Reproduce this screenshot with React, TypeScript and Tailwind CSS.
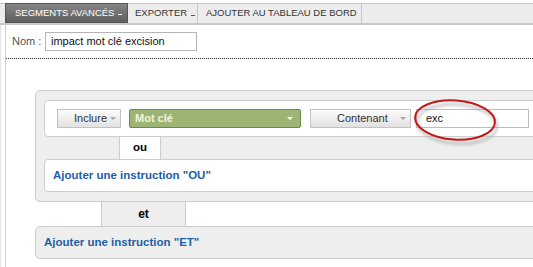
import React from "react";

const Caret = ({ color = "#a8a8a8" }: { color?: string }) => (
  <span
    className="inline-block h-0 w-0 border-x-[3px] border-x-transparent border-t-[3px]"
    style={{ borderTopColor: color }}
  />
);

const App = () => {
  return (
    <div className="relative w-[533px] h-[267px] overflow-hidden bg-white font-['Liberation_Sans',Arial,sans-serif]">
      {/* tab bar */}
      <div className="pt-[3px]">
        <div className="flex h-[22px] border-t border-[#c6c6c6] border-b-2 border-b-[#c9c9c9] bg-[#ececec] pl-[5px] text-[9.5px] uppercase">
          <div className="flex w-[123px] items-center gap-[4px] bg-gradient-to-b from-[#858585] to-[#5e5e5e] border border-[#555] pl-[9px] text-white -mt-px">
            Segments avancés <span className="mt-[3px] h-px w-[4px] bg-white" />
          </div>
          <div className="flex w-[70px] items-center gap-[4px] border-r border-[#c6c6c6] pl-[7px] text-[#333]">
            Exporter <span className="mt-[3px] h-px w-[4px] bg-[#555]" />
          </div>
          <div className="flex w-[164px] items-center border-r border-[#c6c6c6] pl-[8px] text-[#333]">
            Ajouter au tableau de bord
          </div>
        </div>
      </div>

      {/* body */}
      <div className="h-[242px] border-l border-[#e2e2e2] pl-[4px]">
        <div className="h-full border-l border-[#cfcfcf]">
          <div className="flex items-center pt-[7px] pl-[6px] text-[11px]">
            <span className="w-[33px] text-[#555]">Nom :</span>
            <div className="flex h-[19px] w-[152px] items-center border border-[#b5b5b5] pl-[5px] text-[#111]">
              impact mot clé excision
            </div>
          </div>
          <div className="mt-[7px] border-t border-dotted border-[#333]" />

          <div className="ml-[29px] mt-[31px]">
            <div className="w-[520px] rounded-[5px] border border-[#cbcbcb] bg-[#eeeeee] pt-[9px] pb-[9px] pl-[8px]">
              <div className="flex h-[37px] items-center rounded-[4px] border border-[#cfcfcf] bg-white pl-[12px] text-[11px]">
                <div className="flex h-[19px] w-[64px] items-center gap-[3px] border border-[#c2c2c2] bg-gradient-to-b from-[#fbfbfb] to-[#e2e2e2] pl-[16px] text-[#333]">
                  Inclure <Caret />
                </div>
                <div className="ml-[8px] flex h-[19px] w-[172px] items-center justify-between rounded-[2px] border border-[#6d8a4b] bg-[#9db574] pl-[5px] pr-[7px] font-bold text-[#f4f4d8]">
                  Mot clé <Caret color="#ffffff" />
                </div>
                <div className="ml-[9px] flex h-[19px] w-[101px] items-center gap-[12px] border border-[#c2c2c2] bg-gradient-to-b from-[#fbfbfb] to-[#e2e2e2] pl-[26px] text-[#333]">
                  Contenant <Caret />
                </div>
                <div className="ml-[5px] flex h-[19px] w-[113px] items-center border border-[#bdbdbd] pl-[9px] text-[#111]">
                  exc
                </div>
              </div>
              <div className="ml-[75px] flex h-[22px] w-[42px] items-center justify-center border-x border-[#cfcfcf] bg-white text-[11.5px] font-bold text-black">
                ou
              </div>
              <div className="flex h-[33px] items-center rounded-[4px] border border-[#cfcfcf] bg-white pl-[8px] text-[11.5px] font-bold text-[#1d5ea6]">
                Ajouter une instruction "OU"
              </div>
            </div>
            <div className="ml-[66px] flex h-[24px] w-[85px] items-center justify-center border-x border-[#cbcbcb] bg-[#eeeeee] text-[12px] font-bold text-black">
              et
            </div>
            <div className="flex h-[33px] w-[520px] items-center rounded-[5px] border border-[#cbcbcb] bg-[#eeeeee] pl-[8px] text-[11.5px] font-bold text-[#1d5ea6]">
              Ajouter une instruction "ET"
            </div>
          </div>
        </div>
      </div>

      {/* red annotation circle */}
      <svg className="absolute left-[408px] top-[94px]" width="96" height="54" viewBox="0 0 96 54">
        <defs>
          <filter id="sh" x="-20%" y="-20%" width="140%" height="140%">
            <feGaussianBlur stdDeviation="1.5" />
          </filter>
        </defs>
        <ellipse cx="49" cy="30" rx="40" ry="19.5" fill="none" stroke="#9a9a9a" strokeWidth="2.5" opacity="0.6" filter="url(#sh)" transform="rotate(4 49 30)" />
        <ellipse cx="47" cy="26" rx="40" ry="19.5" fill="none" stroke="#c41818" strokeWidth="2" transform="rotate(4 47 26)" />
      </svg>
    </div>
  );
};

export default App;
